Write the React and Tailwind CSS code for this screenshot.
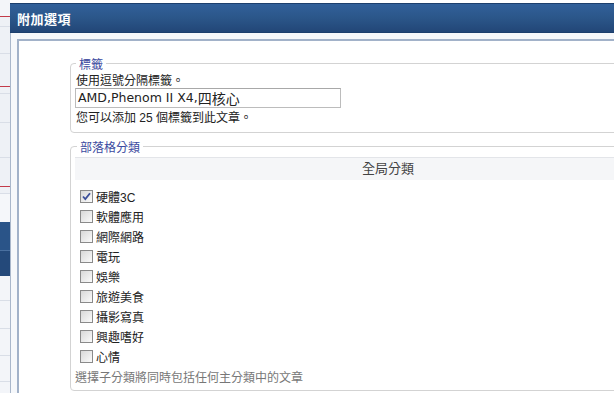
import React from "react";

const font = { fontFamily: '"Liberation Sans", "Noto Sans CJK TC", sans-serif' };

const sideSegs = [
  [17, "bg-[#f3f5f9]", "border-[#c33b4a]"],
  [10, "bg-[#eef1f6]", "border-[#d9dee7]"],
  [27, "bg-[#eef1f6]", "border-[#d9dee7]"],
  [33, "bg-[#eef1f6]", "border-[#c33b4a]"],
  [7, "bg-[#eef1f6]", "border-[#d9dee7]"],
  [29, "bg-[#eef1f6]", "border-[#d9dee7]"],
  [35, "bg-[#eef1f6]", "border-[#d9dee7]"],
  [29, "bg-[#eef1f6]", "border-[#c33b4a]"],
  [7, "bg-[#eef1f6]", "border-[#d9dee7]"],
  [28, "bg-[#f5f7fa]", "border-[#f5f7fa]"],
  [29, "bg-[#2a5488]", "border-[#4a70a0]"],
  [26, "bg-[#24497a]", "border-[#f3f5f9]"],
  [24, "bg-[#f3f5f9]", "border-[#d9dee7]"],
  [28, "bg-[#f3f5f9]", "border-[#d9dee7]"],
  [27, "bg-[#f3f5f9]", "border-[#d9dee7]"],
  [26, "bg-[#f3f5f9]", "border-[#d9dee7]"],
  [12, "bg-[#f3f5f9]", "border-[#f3f5f9]"],
];

const cats = ["硬體3C", "軟體應用", "網際網路", "電玩", "娛樂", "旅遊美食", "攝影寫真", "興趣嗜好", "心情"];

function Checkbox({ checked }) {
  return (
    <div className="w-[13px] h-[13px] border border-[#8a8a8a] bg-gradient-to-br from-[#d8d8d8] to-[#fbfbfb] flex items-center justify-center shrink-0">
      {checked && (
        <svg width="9" height="9" viewBox="0 0 9 9">
          <path d="M1 4.5 L3.3 7 L8 1.2" stroke="#3c4f9a" strokeWidth="1.8" fill="none" />
        </svg>
      )}
    </div>
  );
}

export default function App() {
  return (
    <div className="w-[614px] h-[393px] overflow-hidden flex bg-white text-[#222]" style={font}>
      <div className="w-[10px] shrink-0 flex flex-col">
        {sideSegs.map(([h, bg, bc], i) => (
          <div key={i} className={`${bg} ${bc} border-b shrink-0`} style={{ height: h }} />
        ))}
      </div>
      <div className="flex-1 min-w-0 flex flex-col">
        <div className="h-[3px] bg-white" />
        <div className="h-[30px] bg-gradient-to-b from-[#31609a] via-[#2b5689] to-[#224677] border-t border-b border-[#1c3f6d] flex items-center pl-[7px]">
          <span className="text-white font-bold text-[13px] leading-none tracking-[0.5px]" style={{ fontFamily: '"Noto Sans CJK TC", sans-serif' }}>附加選項</span>
        </div>
        <div className="flex-1 min-h-0 border-l border-[#a9b7cb] bg-[#f6f8fb] pl-[6px] pt-[6px] flex flex-col">
          <div className="flex-1 min-h-0 border-t-2 border-l-2 border-[#a2b2c9] bg-white pt-[14px] pl-[51px] overflow-hidden">
            <fieldset className="w-[640px] border border-[#d3d3d3] rounded-[4px] pl-[5px] pb-[7px]">
              <legend className="text-[12px] pt-[4px] leading-[12px] text-[#3b4aa0] px-[3px]">標籤</legend>
              <div className="text-[12px] pt-[4px] leading-[13px]">使用逗號分隔標籤。</div>
              <div className="-ml-px w-[266px] h-[20px] border border-[#bcbcbc] border-t-[#a8a8a8] flex items-center pl-[2px] text-[12.5px] text-[#222]" style={{ fontFamily: '"DejaVu Sans", "Noto Sans CJK TC", sans-serif' }}>
                AMD,Phenom II X4,<span className="text-[14px]" style={{ fontFamily: '"Noto Sans CJK TC", sans-serif' }}>四核心</span>
              </div>
              <div className="text-[12px] pt-[4px] leading-[13px]">您可以添加 25 個標籤到此文章。</div>
            </fieldset>
            <fieldset className="mt-[5px] w-[640px] border border-[#d3d3d3] rounded-[4px] pl-[4px] pb-[5px]">
              <legend className="text-[12px] pt-[4px] leading-[12px] text-[#3b4aa0] px-[3px] ml-[2px]">部落格分類</legend>
              <div className="mt-[3px] w-[626px] h-[23px] bg-[#f5f6f8] border-t border-[#e3e5e9] flex items-center justify-center text-[13px] text-[#444]">
                全局分類
              </div>
              <div className="mt-[6px] flex flex-col">
                {cats.map((c, i) => (
                  <div key={c} className="h-[20px] flex items-center pl-[5px] gap-[3px]">
                    <Checkbox checked={i === 0} />
                    <span className="text-[12px] leading-none mt-[3px]">{c}</span>
                  </div>
                ))}
              </div>
              <div className="mt-[3px] text-[12px] pt-[2px] leading-[14px] text-[#777]">選擇子分類將同時包括任何主分類中的文章</div>
            </fieldset>
          </div>
        </div>
      </div>
    </div>
  );
}
